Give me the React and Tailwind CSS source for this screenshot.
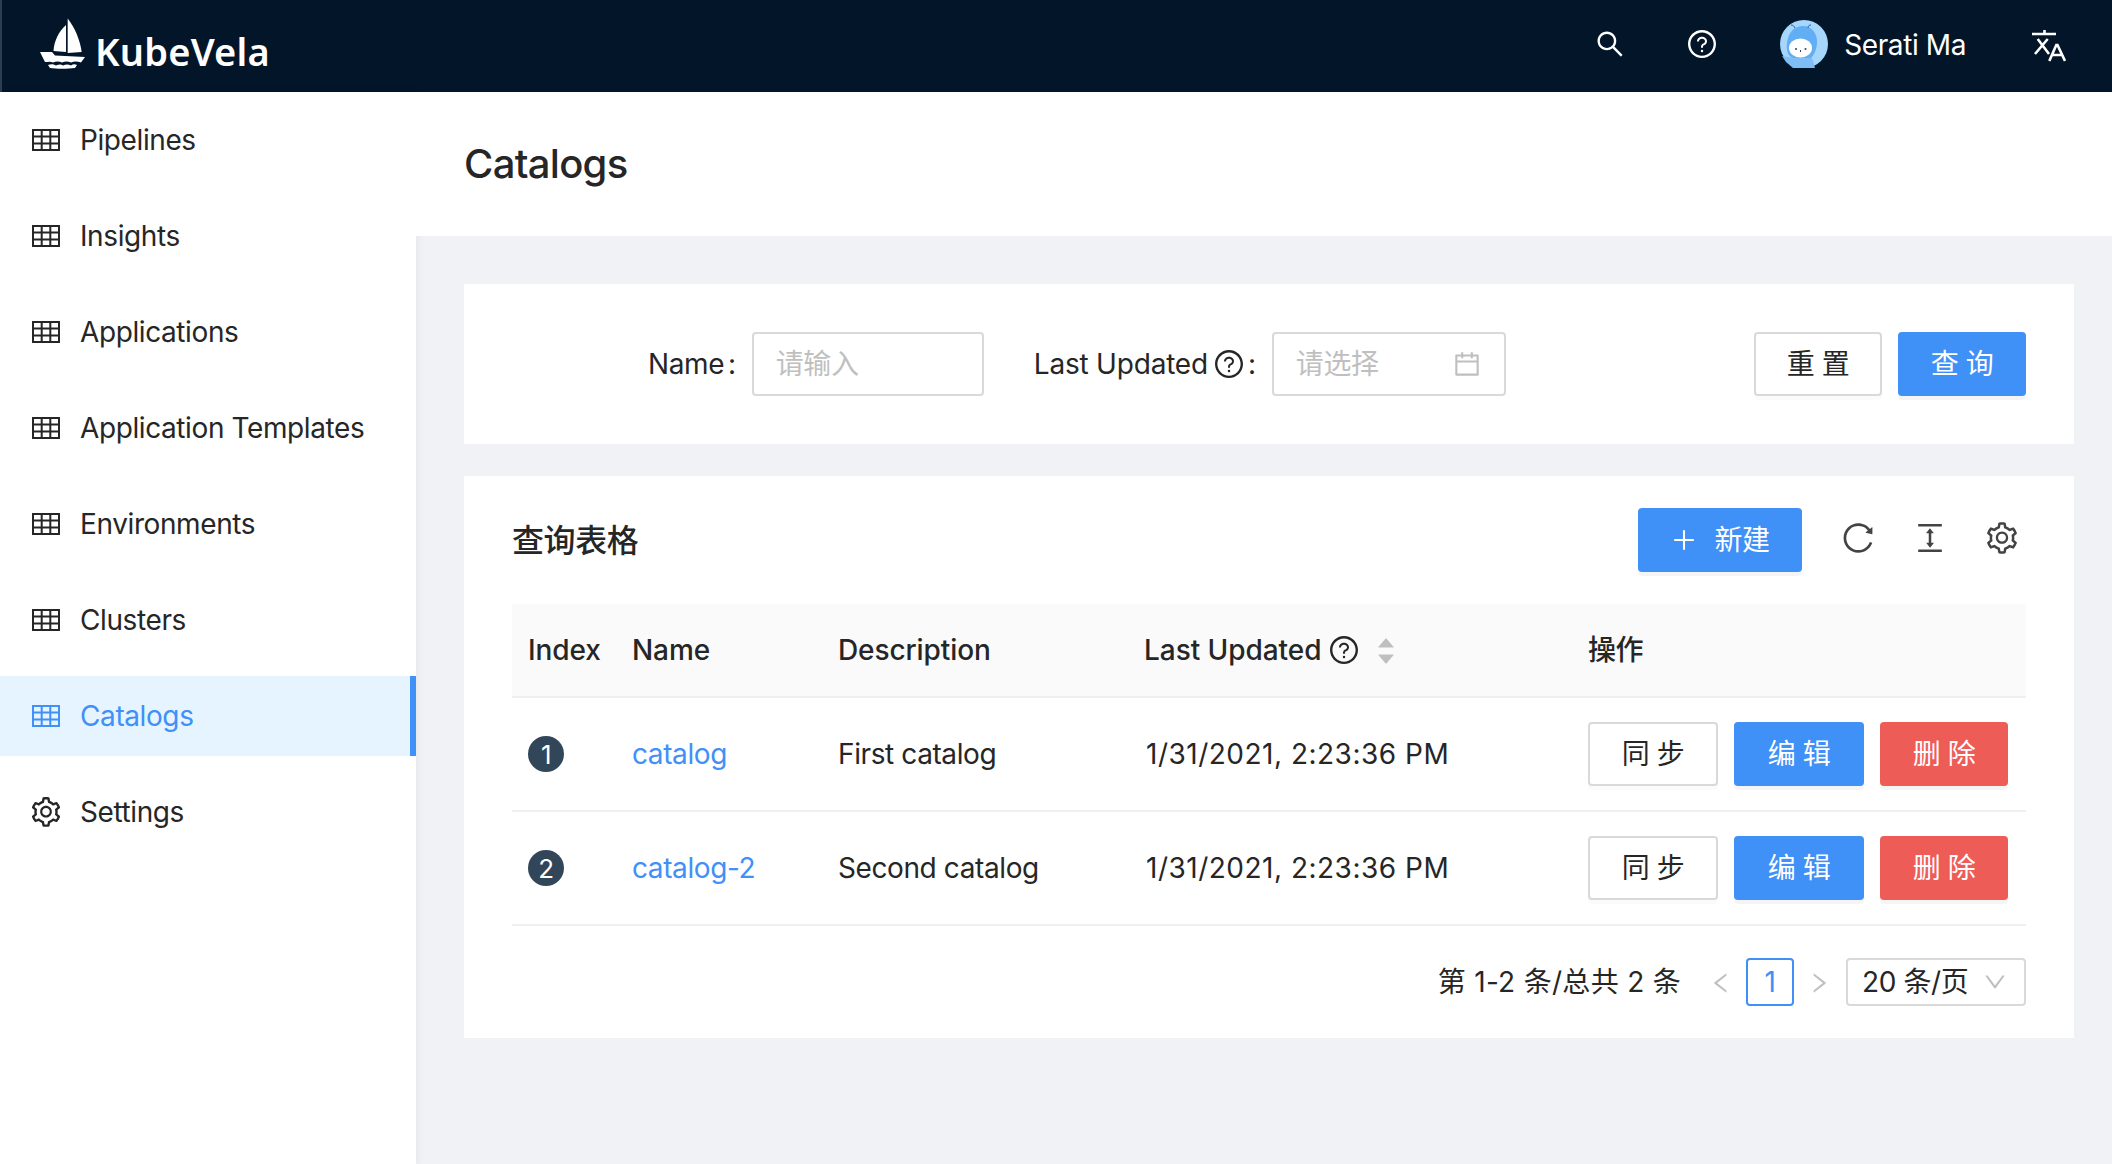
import {
  AiOutlineSearch,
  AiOutlineQuestionCircle,
  AiOutlineReload,
  AiOutlineColumnHeight,
  AiOutlineSetting,
  AiOutlinePlus,
  AiOutlineCalendar,
  AiOutlineLeft,
  AiOutlineRight,
  AiOutlineDown,
  AiFillCaretUp,
  AiFillCaretDown,
} from 'react-icons/ai';

const FONT = 'font-[Inter,"Noto_Sans_CJK_SC",sans-serif]';

const menuItems = ['Pipelines', 'Insights', 'Applications', 'Application Templates', 'Environments', 'Clusters', 'Catalogs', 'Settings'];

const rows = [
  { index: 1, name: 'catalog', description: 'First catalog', updated: '1/31/2021, 2:23:36 PM' },
  { index: 2, name: 'catalog-2', description: 'Second catalog', updated: '1/31/2021, 2:23:36 PM' },
];

function GridIcon() {
  return (
    <svg width="28" height="22" viewBox="0 0 28 22" fill="none" stroke="currentColor" className="shrink-0">
      <rect x="1" y="1" width="26" height="20" strokeWidth="2" />
      <path d="M1 7.5H27M1 14.5H27M9.7 1V21M18.3 1V21" strokeWidth="2" />
    </svg>
  );
}

function Logo() {
  return (
    <svg width="46" height="52" viewBox="10 8 46 52" fill="white" className="mb-[4px] shrink-0">
      <path d="M36 15C29 21 24 31 23.5 41L36 42Z" />
      <path d="M37.7 8.5C45 18 50 30 51.7 42L37.7 43Z" />
      <path d="M10 42L22 42L25 45.5L55 47L51 52.5C47 51 44 51 41 52.5C38 51 35 51 32 52.5C29 51 26 51 23 52.5C20 51 18 52 15 52Z" />
      <path d="M18 55C21 54 23 54 26 55.5C29 54 31 54 33 55.5C36 54 38 54 41 55.5C43 54 45 54 47 55L45 58C38 59 26 59 20 58Z" />
    </svg>
  );
}

function Avatar() {
  return (
    <svg width="48" height="48" viewBox="0 0 48 48" className="shrink-0">
      <circle cx="24" cy="24" r="24" fill="#a6d6fb" />
      <path d="M7 29C6 15 13 6 23 6C32 6 38 14 37 24C36 31 34 35 31 38H12C9 36 7 33 7 29Z" fill="#62aef5" />
      <path d="M2 36L14 38H32L35 48H13L6 42Z" fill="#7fbdf6" />
      <ellipse cx="20.5" cy="28" rx="11.5" ry="9.5" fill="white" />
      <circle cx="16" cy="29" r="1" fill="#2c4468" />
      <circle cx="25.5" cy="29" r="1" fill="#2c4468" />
      <path d="M20.5 30V32" stroke="#2c4468" strokeWidth="1" />
      <path d="M15 8C14 6 13 5 11 5M28 8C28 6 29 5 31 5" stroke="#2c5d9a" strokeWidth="1" fill="none" />
    </svg>
  );
}

function TranslateIcon() {
  return (
    <svg width="34" height="32" viewBox="0 0 34 32" fill="none" stroke="white" strokeWidth="2.6">
      <path d="M0 4H24M12.5 0V4M5.7 9L17 24M15.7 9L3 24" />
      <path d="M17.3 31L24.3 15H25.5L33 31M19.7 25H30.3" />
    </svg>
  );
}

function DefaultButton({ children, className = '' }) {
  return (
    <button className={`h-16 rounded border-2 border-[#d9d9d9] bg-white text-[#262626] shadow-[0_4px_0_rgba(0,0,0,0.015)] ${className}`}>
      {children}
    </button>
  );
}

function PrimaryButton({ children, className = '' }) {
  return (
    <button className={`h-16 rounded bg-[#3f90f7] text-white shadow-[0_4px_0_rgba(0,0,0,0.04)] ${className}`}>
      {children}
    </button>
  );
}

export default function App() {
  return (
    <div className={`flex h-[1164px] w-[2112px] flex-col overflow-hidden bg-[#f0f2f5] text-[28px] tracking-[-0.4px] text-[#262626] ${FONT}`}>
      <header className="flex h-[92px] shrink-0 items-center border-l-2 border-[#2c3e50] bg-[#021529] pl-[38px] text-white">
        <div className="flex items-center gap-[9px]">
          <Logo />
          <span className="mt-[9px] font-['Noto_Sans'] text-[38px] font-semibold leading-none tracking-[0.2px]">KubeVela</span>
        </div>
        <div className="ml-auto flex items-center pb-[5px]">
          <AiOutlineSearch className="h-[32px] w-[32px]" />
          <AiOutlineQuestionCircle className="ml-[60px] h-[32px] w-[32px]" />
          <div className="ml-[62px]">
            <Avatar />
          </div>
          <span className="ml-[16px] mt-[2px] text-[28px]">Serati Ma</span>
          <div className="ml-[66px] mr-[46px] mt-[4px] flex">
            <TranslateIcon />
          </div>
        </div>
      </header>

      <div className="flex min-h-0 flex-1">
        <aside className="flex w-[416px] shrink-0 flex-col gap-4 bg-white pt-2 shadow-[2px_0_8px_rgba(29,35,41,0.05)]">
          {menuItems.map((item) => {
            const active = item === 'Catalogs';
            return (
              <div
                key={item}
                className={`flex h-20 items-center gap-[20px] pl-[32px] ${active ? 'border-r-[6px] border-[#3f90f7] bg-[#e6f4ff] text-[#3f90f7]' : 'text-[#262626]'}`}
              >
                {item === 'Settings' ? <AiOutlineSetting className="-mx-[3px] h-[34px] w-[34px] shrink-0" /> : <GridIcon />}
                <span>{item}</span>
              </div>
            );
          })}
        </aside>

        <main className="flex min-w-0 flex-1 flex-col">
          <div className="flex h-[144px] shrink-0 items-center bg-white pl-[48px]">
            <h1 className="text-[40px] font-medium leading-none tracking-[-0.7px] text-[#262626]">Catalogs</h1>
          </div>

          <div className="flex flex-col gap-8 pl-[48px] pr-[38px] pt-[48px]">
            <section className="flex h-[160px] items-center bg-white pl-[184px] pr-[48px]">
              <label className="flex items-center">
                Name<span className="ml-[4px] mr-[16px]">:</span>
              </label>
              <div className="flex h-16 w-[232px] items-center rounded border-2 border-[#d9d9d9] px-[22px] text-[#bfbfbf]">请输入</div>

              <label className="ml-[50px] flex items-center tracking-[-0.2px]">
                Last Updated
                <AiOutlineQuestionCircle className="ml-[5px] h-[32px] w-[32px]" />
                <span className="ml-[3px] mr-[16px]">:</span>
              </label>
              <div className="flex h-16 w-[234px] items-center justify-between rounded border-2 border-[#d9d9d9] px-[22px] text-[#bfbfbf]">
                请选择
                <AiOutlineCalendar className="h-[30px] w-[30px]" />
              </div>

              <div className="ml-auto flex gap-4">
                <DefaultButton className="w-[128px]">重 置</DefaultButton>
                <PrimaryButton className="w-[128px]">查 询</PrimaryButton>
              </div>
            </section>

            <section className="bg-white px-[48px] pb-[32px] pt-[32px]">
              <div className="flex h-16 items-center">
                <h2 className="mt-[2px] text-[32px] font-medium">查询表格</h2>
                <div className="ml-auto flex items-center">
                  <PrimaryButton className="flex w-[164px] items-center justify-center gap-[16px]">
                    <AiOutlinePlus className="h-[28px] w-[28px]" />
                    新建
                  </PrimaryButton>
                  <div className="mb-[4px] ml-[38px] flex items-center gap-[36px] pr-[6px] text-[#434343]">
                    <AiOutlineReload className="h-[36px] w-[36px]" />
                    <AiOutlineColumnHeight className="h-[36px] w-[36px]" />
                    <AiOutlineSetting className="h-[36px] w-[36px]" />
                  </div>
                </div>
              </div>

              <table className="mt-[32px] w-[1514px] table-fixed border-collapse">
                <colgroup>
                  <col className="w-[104px]" />
                  <col className="w-[206px]" />
                  <col className="w-[306px]" />
                  <col className="w-[444px]" />
                  <col />
                </colgroup>
                <thead>
                  <tr className="h-[93px] border-b-2 border-[#f0f0f0] bg-[#fafafa] text-left">
                    <th className="pl-4 font-medium tracking-[-0.1px]">Index</th>
                    <th className="pl-4 font-medium tracking-[-0.1px]">Name</th>
                    <th className="pl-4 font-medium tracking-[-0.1px]">Description</th>
                    <th className="pl-4 font-medium tracking-[-0.05px]">
                      <span className="flex items-center">
                        Last Updated
                        <AiOutlineQuestionCircle className="ml-[7px] h-[32px] w-[32px]" />
                        <span className="ml-[15px] mt-[2px] flex flex-col text-[#bfbfbf]">
                          <AiFillCaretUp className="-mb-[6px] h-[22px] w-[22px]" />
                          <AiFillCaretDown className="h-[22px] w-[22px]" />
                        </span>
                      </span>
                    </th>
                    <th className="pl-4 font-medium">操作</th>
                  </tr>
                </thead>
                <tbody>
                  {rows.map((row) => (
                    <tr key={row.index} className="h-[114px] border-b-2 border-[#f0f0f0]">
                      <td className="pl-4">
                        <span className="flex h-9 w-9 items-center justify-center rounded-full bg-[#314659] text-[26px] text-white">{row.index}</span>
                      </td>
                      <td className="pl-4 text-[#3f90f7]">{row.name}</td>
                      <td className="pl-4">{row.description}</td>
                      <td className="pl-[18px] tracking-[0.5px]">{row.updated}</td>
                      <td className="pl-4">
                        <div className="flex gap-4">
                          <DefaultButton className="w-[130px]">同 步</DefaultButton>
                          <PrimaryButton className="w-[130px]">编 辑</PrimaryButton>
                          <button className="h-16 w-[128px] rounded bg-[#ee5c58] text-white shadow-[0_4px_0_rgba(0,0,0,0.04)]">删 除</button>
                        </div>
                      </td>
                    </tr>
                  ))}
                </tbody>
              </table>

              <div className="mt-[32px] flex h-12 items-center justify-end">
                <span className="tracking-[0.3px]">第 1-2 条/总共 2 条</span>
                <AiOutlineLeft className="ml-[27px] mt-[2px] h-[26px] w-[26px] text-[#bfbfbf]" />
                <span className="ml-[12px] flex h-12 w-12 items-center justify-center rounded border-2 border-[#3f90f7] text-[#3f90f7]">1</span>
                <AiOutlineRight className="ml-[12px] mt-[2px] h-[26px] w-[26px] text-[#bfbfbf]" />
                <div className="ml-[14px] flex h-12 w-[180px] items-center justify-between rounded border-2 border-[#d9d9d9] pl-[14px] pr-[16px]">
                  20 条/页
                  <AiOutlineDown className="h-[26px] w-[26px] text-[#bfbfbf]" />
                </div>
              </div>
            </section>
          </div>
        </main>
      </div>
    </div>
  );
}
